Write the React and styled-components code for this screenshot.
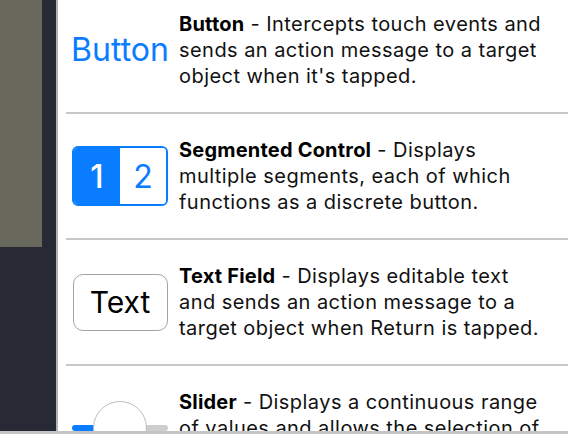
import React from "react";
import styled, { createGlobalStyle } from "styled-components";

const Global = createGlobalStyle`
  html, body { margin: 0; padding: 0; }
  body { width: 568px; height: 434px; overflow: hidden; background: #fff;
    font-family: Inter, "Noto Sans", "Liberation Sans", sans-serif; }
`;

const Frame = styled.div`
  width: 568px;
  height: 434px;
  display: flex;
  flex-direction: column;
  overflow: hidden;
`;

const Main = styled.div`
  flex: 1;
  display: flex;
  min-height: 0;
`;

const Sidebar = styled.div`
  width: 56px;
  background: #272a35;
  display: flex;
  flex-direction: column;
`;

const Swatch = styled.div`
  width: 42px;
  height: 247px;
  background: #68685d;
`;

const Divider = styled.div`
  width: 2px;
  background: #b3b3b3;
`;

const Content = styled.div`
  flex: 1;
  overflow: hidden;
  background: #fff;
  padding-left: 8px;
`;

const List = styled.div`
  margin-top: -12px;
`;

const Row = styled.div`
  height: 124px;
  display: flex;
  align-items: center;
  gap: 11px;
  padding-left: 6px;
  border-bottom: 2px solid #c8c8c8;
`;

const Control = styled.div`
  width: 96px;
  flex: none;
  display: flex;
  align-items: center;
  justify-content: center;
`;

const Desc = styled.p`
  margin: 0;
  width: 369px;
  font-size: 20px;
  line-height: 26px;
  color: #111;
  letter-spacing: 0.45px;
  b { font-weight: 700; color: #000; letter-spacing: 0.2px; }
`;

const LinkButton = styled.span`
  font-size: 32px;
  color: #0a7cff;
  font-weight: 400;
  line-height: 1;
`;

const Segmented = styled.div`
  width: 96px;
  height: 60px;
  box-sizing: border-box;
  border: 2px solid #0a7cff;
  border-radius: 6px;
  overflow: hidden;
  display: flex;
`;

const Segment = styled.div`
  flex: 1;
  display: flex;
  align-items: center;
  justify-content: center;
  font-size: 32px;
  background: ${(p) => (p.$selected ? "#0a7cff" : "#fff")};
  color: ${(p) => (p.$selected ? "#fff" : "#0a7cff")};
  font-weight: ${(p) => (p.$selected ? 500 : 400)};
`;

const TextField = styled.div`
  width: 95px;
  height: 57px;
  box-sizing: border-box;
  border: 1.5px solid #a5a5a5;
  border-radius: 10px;
  display: flex;
  align-items: center;
  justify-content: center;
  font-size: 30px;
  color: #000;
`;

const Slider = styled.div`
  position: relative;
  width: 96px;
  height: 54px;
  display: flex;
  align-items: center;
`;

const Track = styled.div`
  width: 96px;
  height: 6px;
  border-radius: 3px;
  background: linear-gradient(to right, #0a7cff 50%, #cdcdcd 50%);
`;

const Thumb = styled.div`
  position: absolute;
  left: 21px;
  top: 0;
  width: 54px;
  height: 54px;
  box-sizing: border-box;
  border-radius: 50%;
  background: #fff;
  border: 1.5px solid #bdbdbd;
`;

const BottomBar = styled.div`
  height: 3px;
  background: #c4c4c4;
  flex: none;
`;

const items = [
  {
    key: "button",
    control: <LinkButton>Button</LinkButton>,
    title: "Button",
    text: "Intercepts touch events and sends an action message to a target object when it's tapped.",
  },
  {
    key: "seg",
    control: (
      <Segmented>
        <Segment $selected>1</Segment>
        <Segment>2</Segment>
      </Segmented>
    ),
    title: "Segmented Control",
    text: "Displays multiple segments, each of which functions as a discrete button.",
  },
  {
    key: "text",
    control: <TextField>Text</TextField>,
    title: "Text Field",
    text: "Displays editable text and sends an action message to a target object when Return is tapped.",
  },
  {
    key: "slider",
    control: (
      <Slider>
        <Track />
        <Thumb />
      </Slider>
    ),
    title: "Slider",
    text: "Displays a continuous range of values and allows the selection of a single value.",
  },
];

export default function App() {
  return (
    <Frame>
      <Global />
      <Main>
        <Sidebar>
          <Swatch />
        </Sidebar>
        <Divider />
        <Content>
          <List>
            {items.map((it) => (
              <Row key={it.key}>
                <Control>{it.control}</Control>
                <Desc>
                  <b>{it.title}</b> - {it.text}
                </Desc>
              </Row>
            ))}
          </List>
        </Content>
      </Main>
      <BottomBar />
    </Frame>
  );
}
